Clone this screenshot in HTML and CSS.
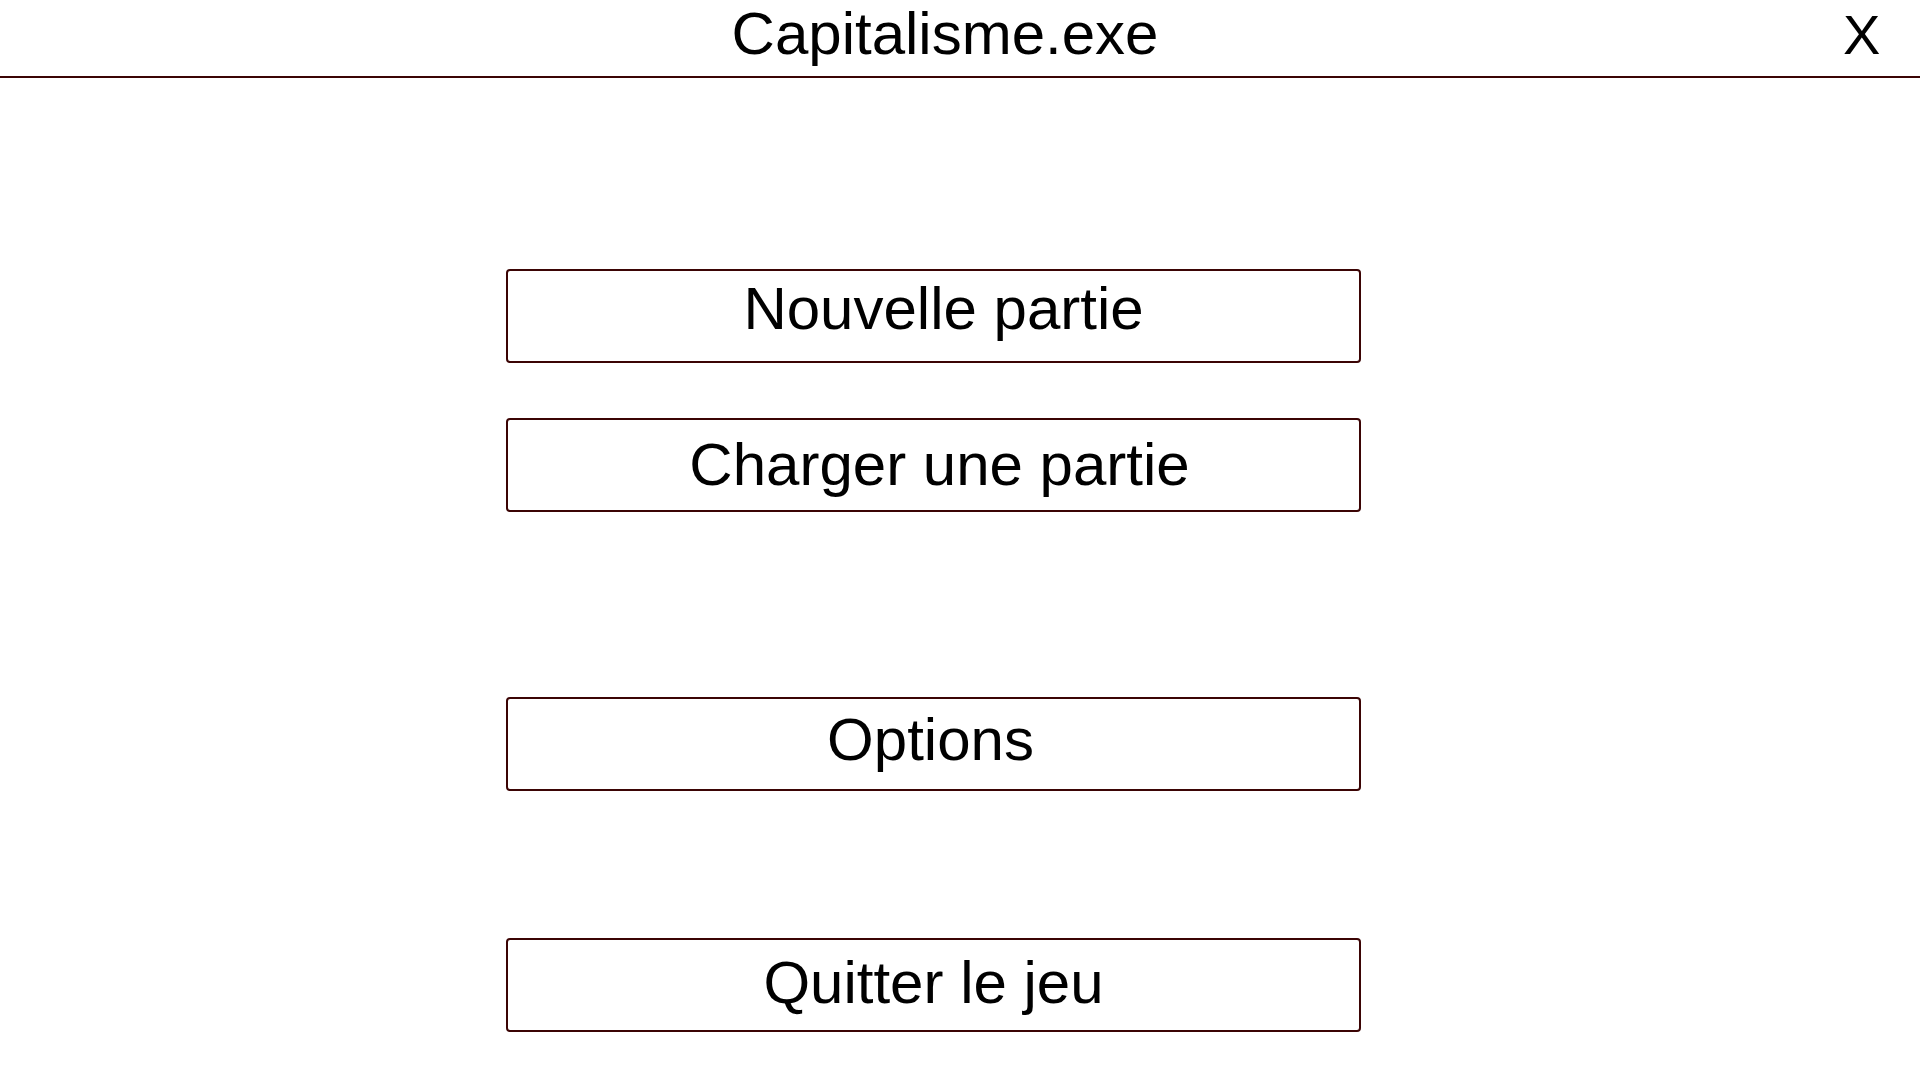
FILE: index.html
```html
<!DOCTYPE html>
<html lang="fr">
<head>
<meta charset="utf-8">
<title>Capitalisme.exe</title>
<link rel="stylesheet" href="styles.css">
</head>
<body>
<header class="topbar">
  <div class="title">Capitalisme.exe</div>
  <div class="close">X</div>
</header>
<main class="menu">
  <div class="btn btn-new">Nouvelle partie</div>
  <div class="btn btn-load">Charger une partie</div>
  <div class="btn btn-options">Options</div>
  <div class="btn btn-quit">Quitter le jeu</div>
</main>
</body>
</html>
```
FILE: styles.css
```css
html, body {
  margin: 0;
  padding: 0;
  background: #ffffff;
  color: #000000;
  font-family: "Liberation Sans", Arial, sans-serif;
}

.topbar {
  display: flex;
  height: 76px;
  border-bottom: 2px solid #3b0404;
}

.title {
  flex: 1;
  padding-left: 60px;
  text-align: center;
  font-size: 60px;
  line-height: 68px;
}

.close {
  width: 77px;
  padding-left: 13px;
  font-size: 56px;
  line-height: 70px;
}

.menu {
  display: flex;
  flex-direction: column;
  padding-left: 506px;
}

.btn {
  box-sizing: border-box;
  width: 855px;
  height: 94px;
  border: 2px solid #3b0404;
  border-radius: 4px;
  text-align: center;
  font-size: 60px;
  line-height: 64px;
}

.btn-new {
  margin-top: 191px;
  padding-top: 6px;
  padding-left: 20px;
}

.btn-load {
  margin-top: 55px;
  padding-top: 13px;
  padding-left: 12px;
}

.btn-options {
  margin-top: 185px;
  padding-top: 9px;
  padding-right: 6px;
}

.btn-quit {
  margin-top: 147px;
  padding-top: 11px;
}
```
